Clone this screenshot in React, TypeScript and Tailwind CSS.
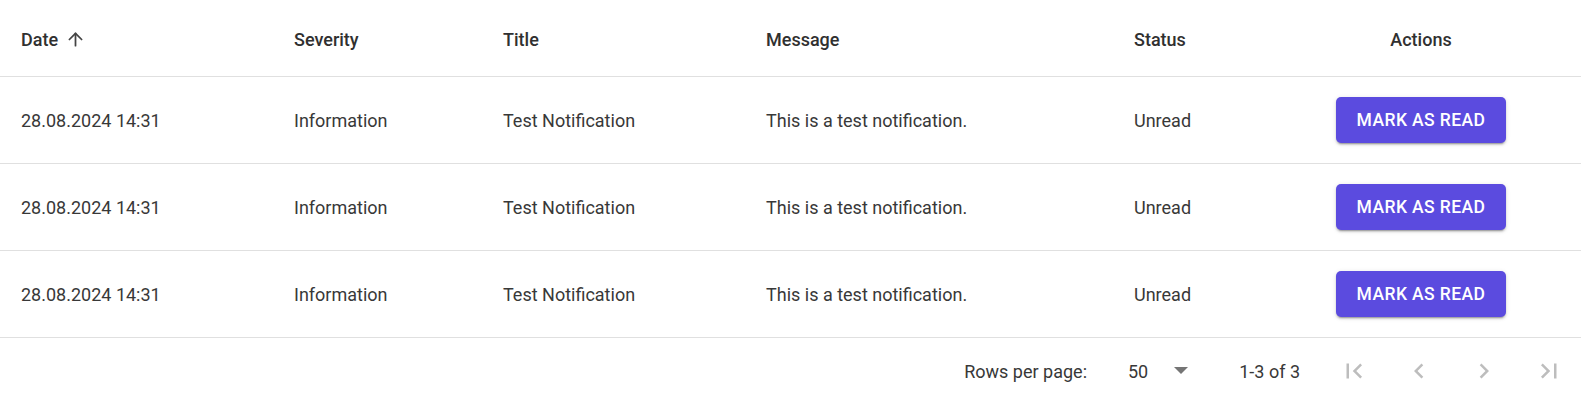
import { ArrowUp } from 'lucide-react'

type Row = {
  date: string
  severity: string
  title: string
  message: string
  status: string
}

const rows: Row[] = [
  { date: '28.08.2024 14:31', severity: 'Information', title: 'Test Notification', message: 'This is a test notification.', status: 'Unread' },
  { date: '28.08.2024 14:31', severity: 'Information', title: 'Test Notification', message: 'This is a test notification.', status: 'Unread' },
  { date: '28.08.2024 14:31', severity: 'Information', title: 'Test Notification', message: 'This is a test notification.', status: 'Unread' },
]

const cols = 'grid grid-cols-[273px_209px_263px_368px_148px_320px]'

function PagerIcon({ d }: { d: string }) {
  return (
    <button className="grid w-[40px] h-[40px] place-items-center text-[#bdbdbd]" disabled>
      <svg width="30" height="30" viewBox="0 0 24 24" fill="currentColor">
        <path d={d} />
      </svg>
    </button>
  )
}

export default function App() {
  return (
    <div className="w-[1590px] h-[403px] bg-white font-['Roboto',sans-serif] text-[18px] text-[#383838]">
      <div className="w-[1581px]">
        {/* header */}
        <div className={`${cols} h-[77px] border-b border-[#e0e0e0] font-medium text-[#303030]`}>
          <div className="flex items-center pl-[21px] pt-[3px] gap-[7px]">
            <span>Date</span>
            <ArrowUp size={21} strokeWidth={2} className="text-[#444]" />
          </div>
          <div className="flex items-center pl-[21px] pt-[3px]">Severity</div>
          <div className="flex items-center pl-[21px] pt-[3px]">Title</div>
          <div className="flex items-center pl-[21px] pt-[3px]">Message</div>
          <div className="flex items-center pl-[21px] pt-[3px]">Status</div>
          <div className="flex items-center justify-center pt-[3px]">Actions</div>
        </div>

        {/* body */}
        {rows.map((r, i) => (
          <div key={i} className={`${cols} h-[87px] border-b border-[#e0e0e0]`}>
            <div className="flex items-center pl-[21px]">{r.date}</div>
            <div className="flex items-center pl-[21px]">{r.severity}</div>
            <div className="flex items-center pl-[21px]">{r.title}</div>
            <div className="flex items-center pl-[21px]">{r.message}</div>
            <div className="flex items-center pl-[21px]">{r.status}</div>
            <div className="flex items-center justify-center">
              <button className="w-[170px] h-[46px] rounded-[5px] bg-[#5b4bdf] text-white text-[17.5px] font-medium uppercase tracking-[0.4px] shadow-[0_3px_1px_-2px_rgba(0,0,0,0.2),0_2px_2px_0_rgba(0,0,0,0.14),0_1px_5px_0_rgba(0,0,0,0.12)]">
                Mark as read
              </button>
            </div>
          </div>
        ))}

        {/* pagination */}
        <div className="flex items-center justify-end h-[66px] pr-[12px]">
          <span>Rows per page:</span>
          <div className="flex items-center ml-[41px]">
            <span>50</span>
            <svg className="ml-[26px]" width="14" height="8" viewBox="0 0 14 8">
              <path d="M0 0 L14 0 L7 7 Z" fill="#757575" />
            </svg>
          </div>
          <span className="ml-[51px] mr-[34px]">1-3 of 3</span>
          <div className="flex items-center gap-[25px]">
            <PagerIcon d="M18.41 16.59L13.82 12l4.59-4.59L17 6l-6 6 6 6zM6 6h2v12H6z" />
            <PagerIcon d="M15.41 7.41L14 6l-6 6 6 6 1.41-1.41L10.83 12z" />
            <PagerIcon d="M10 6L8.59 7.41 13.17 12l-4.58 4.59L10 18l6-6z" />
            <PagerIcon d="M5.59 7.41L10.18 12l-4.59 4.59L7 18l6-6-6-6zM16 6h2v12h-2z" />
          </div>
        </div>
      </div>
    </div>
  )
}
